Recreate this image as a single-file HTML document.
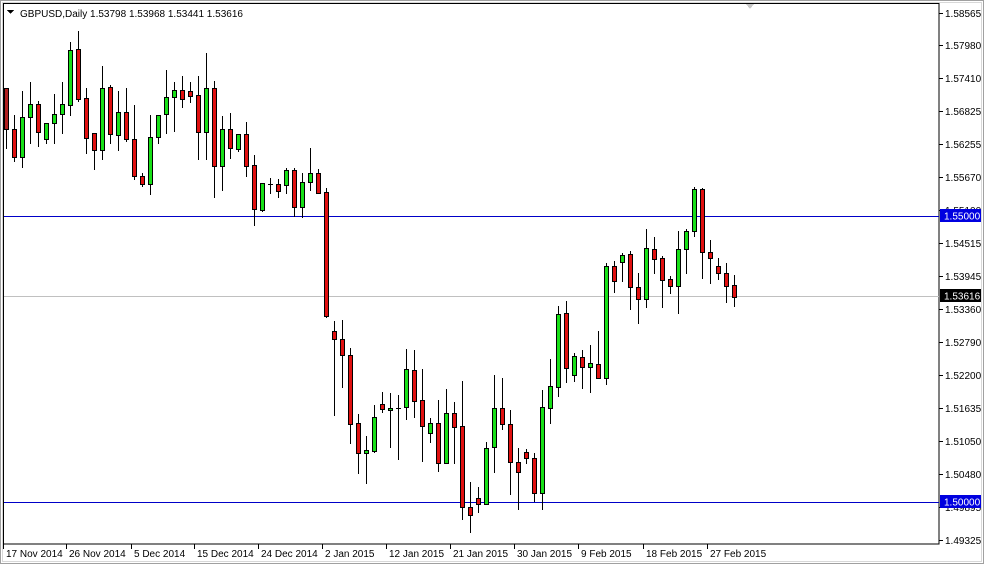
<!DOCTYPE html>
<html><head><meta charset="utf-8">
<style>
html,body{margin:0;padding:0;background:#fff;width:984px;height:564px;overflow:hidden}
svg{display:block}
text{font-family:"Liberation Sans",sans-serif;font-size:10px;fill:#000}
</style></head><body>
<svg id="s" width="984" height="564" xmlns="http://www.w3.org/2000/svg" shape-rendering="crispEdges">
<rect x="0" y="0" width="984" height="564" fill="#fff"/>
<rect x="0.5" y="0.5" width="983" height="563" fill="none" stroke="#a0a0a0"/>
<rect x="2.5" y="2.5" width="979" height="559" fill="none" stroke="#d8d8d8"/>
<rect x="3.5" y="3.5" width="935.5" height="540.5" fill="none" stroke="#000"/>
<line x1="4" y1="296.5" x2="939" y2="296.5" stroke="#c0c0c0"/>
<line x1="4" y1="216.5" x2="939" y2="216.5" stroke="#0000c8"/>
<line x1="4" y1="502.5" x2="939" y2="502.5" stroke="#0000c8"/>
<path d="M746 4 L754 4 L750 9 Z" fill="#c8c8c8"/>
<path d="M7 10 L14 10 L10.5 14 Z" fill="#000"/>
<text x="20" y="17" font-size="10.5">GBPUSD,Daily  1.53798 1.53968 1.53441 1.53616</text>
<g id="c"></g>
<g id="ax"></g>
</svg>
<script>
var z4=[[205,205,328,385,'#b02020'],[285,328,410,422,'r'],[213,292,410,440,'g'],[186,253,292,368,'g'],[243,253,335,377,'r'],[308,310,358,370,'g'],[222,283,310,370,'g'],[186,253,283,338,'g'],[67,91,256,285,'g'],[33,88,236,242,'r'],[205,235,353,398,'r'],[340,340,391,446,'r'],[138,205,391,416,'g'],[195,202,343,368,'r'],[213,277,344,389,'g'],[205,277,358,362,'r'],[256,358,467,476,'r'],[458,468,492,498,'r'],[285,352,493,523,'g'],[286,286,352,370,'g'],[150,232,283,340,'g'],[186,211,232,332,'g'],[168,211,238,260,'r'],[186,214,227,245,'r'],[168,226,337,418,'r'],[100,205,337,418,'g'],[183,205,437,530,'r'],[288,328,437,510,'g'],[280,328,385,413,'r'],[343,343,388,392,'g'],[307,343,437,467,'r'],[406,436,568,615,'r']];
var z5=[[128,130,210,212,'g'],[115,133,133,158,'d'],[118,133,152,170,'r'],[85,91,136,158,'g'],[85,91,202,228,'r'],[100,127,202,232,'g'],[25,100,127,150,'g'],[88,100,158,160,'r'],[145,157,528,532,'r'],[543,574,598,825,'r'],[540,598,646,742,'r'],[625,646,853,908,'r'],[823,850,940,998,'r'],[888,930,940,1030,'g'],[795,832,932,937,'g'],[757,793,808,815,'r'],[760,804,810,920,'g'],[765,803,803,958,'d'],[627,688,802,838,'g'],[630,690,782,832,'r'],[688,780,857,962,'r'],[835,850,880,905,'g'],[780,850,970,992,'r'],[748,820,970,970,'g'],[785,820,860,968,'r'],[722,858,1102,1138,'r'],[1025,1102,1124,1175,'r'],[1042,1075,1092,1115,'r'],[905,925,1092,1092,'g'],[705,805,922,995,'g'],[713,805,853,867,'r'],[810,853,965,1062,'r'],[925,965,995,1108,'r'],[928,937,955,970,'r']];
var z6=[[850,865,970,992,'r'],[660,712,970,1018,'g'],[568,648,715,760,'g'],[408,432,650,677,'g'],[393,430,595,637,'r'],[548,558,615,632,'g'],[540,562,592,655,'r'],[525,580,592,665,'g'],[483,582,625,625,'r'],[280,288,625,643,'g'],[272,288,333,365,'r'],[250,255,277,333,'g'],[243,253,352,418,'r'],[308,352,388,458,'r'],[178,235,388,412,'g'],[202,238,268,308,'r'],[257,265,330,412,'r'],[318,327,347,368,'r'],[183,238,347,430,'g'],[178,183,238,310,'g'],[50,58,184,198,'g'],[53,58,247,323,'r'],[210,247,265,340,'r'],[265,288,310,328,'r'],[278,310,347,397,'r'],[315,345,380,408,'r']];
var all=[];
z4.forEach(function(a){all.push(a.slice(0,4).map(function(v){return 20+v/3}).concat([a[4]]))});
z5.forEach(function(a){all.push(a.slice(0,4).map(function(v){return 140+v/3}).concat([a[4]]))});
z6.forEach(function(a){all.push(a.slice(0,4).map(function(v){return 170+v/3}).concat([a[4]]))});
var h='';
all.forEach(function(a,i){
 var cx=Math.round(5.5+8*i)+0.5;
 var H=Math.round(a[0]),T=Math.round(a[1]),B=Math.round(a[2]),L=Math.round(a[3]);
 h+='<line x1="'+cx+'" y1="'+H+'" x2="'+cx+'" y2="'+(L+1)+'" stroke="#000"/>';
 var col=a[4]=='r'?'#e01010':a[4]=='g'?'#18e018':a[4];
 if(a[4]=='d'){h+='<line x1="'+(cx-2.5)+'" y1="'+(T+0.5)+'" x2="'+(cx+2.5)+'" y2="'+(T+0.5)+'" stroke="#000"/>';}
 else{var ht=Math.max(B-T,2);h+='<rect x="'+(cx-2)+'" y="'+(T+0.5)+'" width="4" height="'+ht+'" fill="'+col+'" stroke="#000"/>';}
});
document.getElementById('c').innerHTML=h;
var ax='';
var pr=[['1.58565',13],['1.57980',45],['1.57410',78],['1.56825',111],['1.56255',144],['1.55670',177],['1.55100',210],['1.54515',243],['1.53945',276],['1.53360',309],['1.52790',342],['1.52200',375],['1.51635',408],['1.51050',441],['1.50480',474],['1.49895',507],['1.49325',540]];
pr.forEach(function(p){ax+='<line x1="939" y1="'+(p[1]+0.5)+'" x2="943" y2="'+(p[1]+0.5)+'" stroke="#000"/><text x="945" y="'+(p[1]+4)+'">'+p[0]+'</text>';});
ax+='<rect x="940" y="209" width="41" height="13" fill="#0000e0"/><text x="944" y="219.5" style="fill:#fff">1.55000</text>';
ax+='<rect x="940" y="289" width="41" height="13" fill="#000"/><text x="944" y="299.5" style="fill:#fff">1.53616</text>';
ax+='<rect x="940" y="495" width="41" height="13" fill="#0000e0"/><text x="944" y="505.5" style="fill:#fff">1.50000</text>';
var d=[['17 Nov 2014',5],['26 Nov 2014',68],['5 Dec 2014',133],['15 Dec 2014',196],['24 Dec 2014',260],['2 Jan 2015',324],['12 Jan 2015',388],['21 Jan 2015',452],['30 Jan 2015',516],['9 Feb 2015',580],['18 Feb 2015',645],['27 Feb 2015',709]];
d.forEach(function(p){ax+='<line x1="'+(p[1]-1.5)+'" y1="544" x2="'+(p[1]-1.5)+'" y2="549" stroke="#000"/><text x="'+(p[1]+1)+'" y="557">'+p[0]+'</text>';});
document.getElementById('ax').innerHTML=ax;
</script>
</body></html>
